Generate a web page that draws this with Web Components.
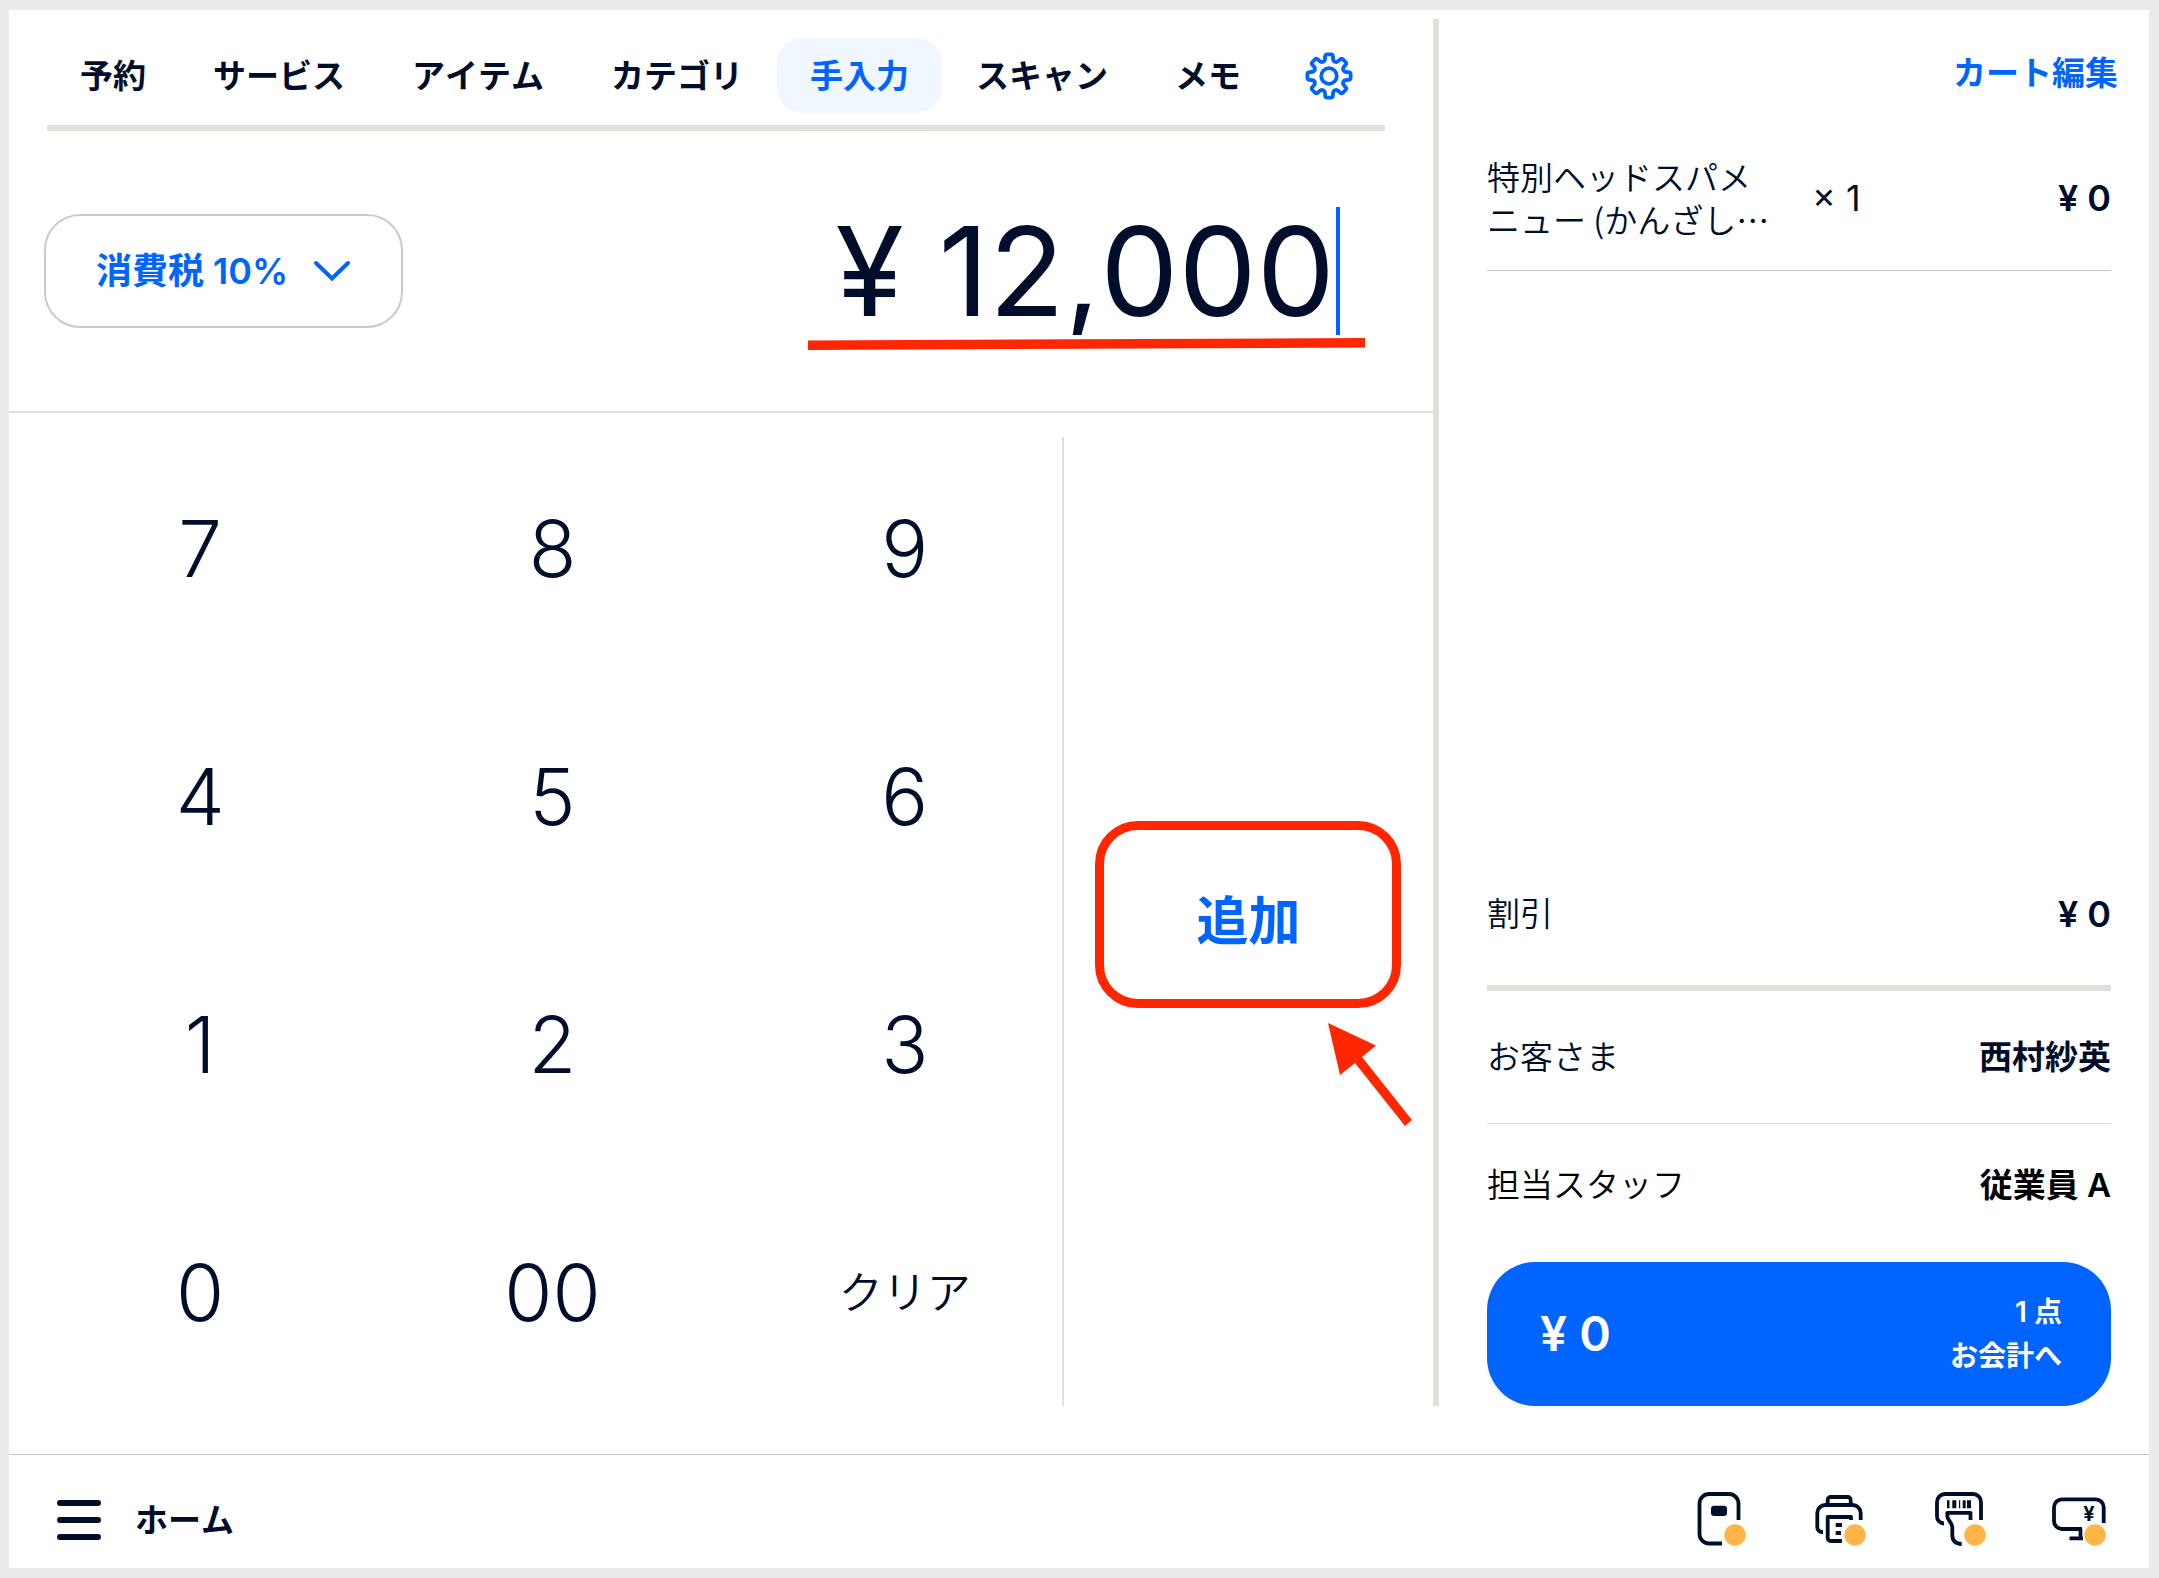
<!DOCTYPE html>
<html lang="ja">
<head>
<meta charset="utf-8">
<title>手入力</title>
<style>
    :root {
        --ink: #000d2b;
        --blue: #0064ff;
        --tint: #f0f7ff;
        --rule: #dfe0d9;
        --hairline: #c6c6c6;
        --mark: #ff2600;
        --dot: #ffb546;
    }

    body {
        margin: 0;
        background: #ebebeb;
        color: var(--ink);
        font: 500 33px/44px Inter, "Noto Sans CJK JP", sans-serif;
        font-kerning: none;
    }
</style>
</head>
<body>
<pos-app>
    <pos-tabs slot="main">
        <pos-tab>予約</pos-tab>
        <pos-tab>サービス</pos-tab>
        <pos-tab>アイテム</pos-tab>
        <pos-tab>カテゴリ</pos-tab>
        <pos-tab active>手入力</pos-tab>
        <pos-tab>スキャン</pos-tab>
        <pos-tab>メモ</pos-tab>
    </pos-tabs>
    <amount-entry slot="main" value="¥ 12,000" tax="消費税 10%"></amount-entry>
    <key-pad slot="main">追加</key-pad>

    <pos-cart slot="cart">
        <cart-item slot="items" quantity="1" price="¥ 0">特別ヘッドスパメニュー (かんざし…</cart-item>
        <cart-row class="discount" value="¥ 0">割引</cart-row>
        <cart-row class="customer" value="西村紗英">お客さま</cart-row>
        <cart-row class="staff" value="従業員 A">担当スタッフ</cart-row>
        <checkout-button slot="checkout" total="¥ 0" count="1 点">お会計へ</checkout-button>
    </pos-cart>

    <pos-footer slot="footer">ホーム</pos-footer>
</pos-app>

<script>
const resetStyle = `
    * { box-sizing: border-box; }
    button, input, select {
        margin: 0;
        padding: 0;
        border: 0;
        background: none;
        color: inherit;
        font: inherit;
        font-kerning: inherit;
        cursor: pointer;
    }
    svg { display: block; fill: none; }
`

// Attaches an open root and fills it with the element's own styles and markup
class PosElement extends HTMLElement {
    constructor() {
        super()
        const template = document.createElement('template')
        template.innerHTML = `<style>${resetStyle}${this.constructor.css}</style>${this.constructor.html}`
        this.attachShadow({ mode: 'open' })
        this.shadowRoot.appendChild(template.content.cloneNode(true))
    }

    fill(selector, attribute) {
        this.shadowRoot.querySelector(selector).textContent = this.getAttribute(attribute)
    }
}

class PosApp extends PosElement {
    static css = `
        :host {
            display: grid;
            grid-template-columns: minmax(0, 1fr) 6px 710px;
            grid-template-rows: 1fr auto;
            box-sizing: border-box;
            min-height: 100vh;
            border: solid #ebebeb;
            border-width: 10px 10px 10px 9px;
            background: #fff;
        }
        main { display: flex; flex-direction: column; }
        .divider { margin: 9px 0 48px; background: var(--rule); }
        aside { display: grid; }
        footer { grid-column: 1 / -1; border-top: 1px solid var(--hairline); }
    `
    static html = `
        <main><slot name="main"></slot></main>
        <div class="divider"></div>
        <aside><slot name="cart"></slot></aside>
        <footer><slot name="footer"></slot></footer>
    `
}

// One tooth per 45 degrees, joined by a rounded valley
function gearPath() {
    const point = (u, v, deg) => {
        const a = deg * Math.PI / 180
        const x = 24 + u * Math.cos(a) - v * Math.sin(a)
        const y = 24 + u * Math.sin(a) + v * Math.cos(a)
        return `${x.toFixed(2)} ${y.toFixed(2)}`
    }
    let d = `M${point(17.5, -4, 0)}`
    for (let deg = 0; deg < 360; deg += 45) {
        d += `L${point(19.3, -3.9, deg)}Q${point(21.6, -3.9, deg)} ${point(21.6, -1.8, deg)}`
        d += `L${point(21.6, 1.8, deg)}Q${point(21.6, 3.9, deg)} ${point(19.3, 3.9, deg)}`
        d += `L${point(17.5, 4, deg)}C${point(14.3, 4, deg)} ${point(14.3, -4, deg + 45)} ${point(17.5, -4, deg + 45)}`
    }
    return d + 'Z'
}

class PosTabs extends PosElement {
    static css = `
        :host {
            display: block;
            margin: 0 48px 0 38px;
            padding: 28px 0 12px;
            border-bottom: 6px solid var(--rule);
        }
        nav { display: flex; align-items: center; gap: 1px; }
        .settings { margin-left: 30px; color: var(--blue); }
    `
    static html = `
        <nav>
            <slot></slot>
            <button class="settings" aria-label="設定">
                <svg width="48" height="48" viewBox="0 0 48 48" stroke="currentColor" stroke-width="3.8" stroke-linejoin="round">
                    <path d="${gearPath()}"/>
                    <circle cx="24" cy="24" r="7.8"/>
                </svg>
            </button>
        </nav>
    `
}

class PosTab extends PosElement {
    static css = `
        :host { display: block; }
        button {
            height: 75px;
            padding: 0 33px;
            border-radius: 26px;
            font-weight: 600;
            white-space: nowrap;
        }
        :host([active]) button { background: var(--tint); color: var(--blue); }
    `
    static html = `<button><slot></slot></button>`
}

class AmountEntry extends PosElement {
    static css = `
        :host {
            display: flex;
            align-items: center;
            justify-content: space-between;
            height: 280px;
            padding: 0 93px 0 35px;
            border-bottom: 2px solid var(--rule);
        }
        .tax { display: grid; align-items: center; color: var(--blue); }
        .tax > * { grid-area: 1 / 1; }
        select {
            appearance: none;
            width: 359px;
            height: 114px;
            padding: 0 0 0 50px;
            border: 2px solid #c8ccc6;
            border-radius: 36px;
            font-size: 36px;
            font-weight: 600;
        }
        .tax svg { justify-self: end; margin-right: 52px; pointer-events: none; }
        .amount { position: relative; }
        input {
            width: 640px;
            height: 128px;
            padding-right: 1px;
            border-right: 4px solid var(--blue);
            font-size: 124px;
            font-weight: 400;
            line-height: 128px;
            text-align: right;
            cursor: text;
        }
        .underline { position: absolute; top: 130px; right: -25px; }
    `
    static html = `
        <label class="tax">
            <select aria-label="税率"><option></option></select>
            <svg width="38" height="22" viewBox="0 0 38 22" stroke="currentColor" stroke-width="4" stroke-linecap="round">
                <path d="M3 3l16 15.5L35 3"/>
            </svg>
        </label>
        <div class="amount">
            <input type="text" inputmode="numeric" aria-label="金額">
            <svg class="underline" width="557" height="14" viewBox="0 0 557 14" stroke="var(--mark)" stroke-width="9.5">
                <path d="M0 8.2L557 5.8"/>
            </svg>
        </div>
    `

    connectedCallback() {
        this.fill('option', 'tax')
        this.shadowRoot.querySelector('input').value = this.getAttribute('value')
    }
}

class KeyPad extends PosElement {
    static css = `
        :host {
            display: grid;
            grid-template-columns: minmax(0, 1fr) 369px;
            flex: 1;
            padding: 24px 0 48px;
        }
        .keys {
            display: grid;
            grid-template-columns: repeat(3, 1fr);
            grid-auto-rows: 1fr;
            gap: 48px 52px;
            padding: 12px 7px 13px 41px;
            border-right: 2px solid var(--rule);
        }
        .keys button { font-size: 78px; font-weight: 300; line-height: 96px; }
        .keys .clear { font-size: 44px; font-weight: 350; }
        .add { position: relative; display: grid; place-items: center; }
        .add button {
            width: 280px;
            height: 160px;
            color: var(--blue);
            font-size: 52px;
            font-weight: 600;
        }
        .frame, .arrow { position: absolute; pointer-events: none; }
        .frame {
            inset: calc(50% - 101px) 32px auto 31px;
            height: 187px;
            border: 9px solid var(--mark);
            border-radius: 43px;
        }
        .arrow { top: calc(50% + 101px); right: 20px; }
    `
    static html = `
        <div class="keys">
            ${['7', '8', '9', '4', '5', '6', '1', '2', '3', '0', '00'].map(key => `<button>${key}</button>`).join('')}
            <button class="clear">クリア</button>
        </div>
        <div class="add">
            <button><slot></slot></button>
            <div class="frame"></div>
            <svg class="arrow" width="85" height="104" viewBox="0 0 85 104">
                <path d="M0 0L48 22.5L34 34L84 97L77 103L27 40L12 52Z" fill="var(--mark)"/>
            </svg>
        </div>
    `
}

class PosCart extends PosElement {
    static css = `
        :host { display: flex; flex-direction: column; padding-bottom: 48px; }
        header { display: flex; justify-content: flex-end; padding: 41px 31px 0; }
        header button { color: var(--blue); font-weight: 600; }
        .body { display: flex; flex: 1; flex-direction: column; padding: 0 38px 0 48px; }
        .items { flex: 1; }
        ::slotted(.discount) { padding-bottom: 49px; border-bottom: 6px solid var(--rule); }
        ::slotted(.customer) { padding: 44px 0; border-bottom: 1px solid var(--rule); }
        ::slotted(.staff) { padding: 39px 0 55px; color: #000; }
    `
    static html = `
        <header><button>カート編集</button></header>
        <div class="body">
            <div class="items"><slot name="items"></slot></div>
            <slot></slot>
            <slot name="checkout"></slot>
        </div>
    `
}

class CartItem extends PosElement {
    static css = `
        :host {
            display: grid;
            grid-template-columns: 292px 1fr auto;
            align-items: center;
            gap: 33px;
            padding: 60px 0 29px;
            border-bottom: 1px solid var(--hairline);
        }
        .name { font-family: "Noto Sans CJK JP", sans-serif; font-weight: 350; line-height: 43px; }
        .quantity { font-size: 36px; font-weight: 400; }
        .price { font-size: 36px; font-weight: 600; }
    `
    static html = `
        <div class="name"><slot></slot></div>
        <div class="quantity">× <span></span></div>
        <div class="price"></div>
    `

    connectedCallback() {
        this.fill('.quantity span', 'quantity')
        this.fill('.price', 'price')
    }
}

class CartRow extends PosElement {
    static css = `
        :host { display: flex; align-items: center; justify-content: space-between; }
        .label { font-weight: 350; }
        .value { font-weight: 600; }
        :host(.discount) .value { font-size: 36px; }
    `
    static html = `
        <span class="label"><slot></slot></span>
        <span class="value"></span>
    `

    connectedCallback() {
        this.fill('.value', 'value')
    }
}

class CheckoutButton extends PosElement {
    static css = `
        :host { display: block; }
        button {
            display: flex;
            align-items: center;
            justify-content: space-between;
            width: 100%;
            height: 144px;
            padding: 0 49px 0 53px;
            border-radius: 48px;
            background: var(--blue);
            color: #fff;
            font-weight: 600;
        }
        .total { font-size: 48px; }
        .action { font-size: 28px; text-align: right; }
        .action span { display: block; }
    `
    static html = `
        <button>
            <span class="total"></span>
            <span class="action"><span class="count"></span><slot></slot></span>
        </button>
    `

    connectedCallback() {
        this.fill('.total', 'total')
        this.fill('.count', 'count')
    }
}

const deviceIcons = {
    カードリーダー: `
        <path d="M46.5 30V13.5a9.5 9.5 0 0 0-9.5-9.5H17a9.5 9.5 0 0 0-9.5 9.5V44a9.5 9.5 0 0 0 9.5 9.5h13"/>
        <rect x="19" y="15.7" width="16" height="10.4" rx="3" fill="currentColor" stroke="none"/>`,
    プリンター: `
        <path d="M11 42h-1a4.7 4.7 0 0 1-4.7-4.7V23a8 8 0 0 1 8-8h27.4a8 8 0 0 1 8 8v7"/>
        <path d="M15.7 15v-5a3 3 0 0 1 3-3h17a3 3 0 0 1 3 3v5"/>
        <path d="M39 30v-3H15.7v21a3 3 0 0 0 3 3H30M23.7 35H30M23.7 43H29"/>`,
    バーコードリーダー: `
        <path d="M12 33.5a7 7 0 0 1-7-7V12a8 8 0 0 1 8-8h28a8 8 0 0 1 8 8v18"/>
        <path d="M38.5 30v-7.2H15.3v3.2c0 4.5 5 6.5 5 11.5V45c0 5 2.5 8.8 9.4 9"/>
        <path stroke="none" fill="currentColor" d="M15 10.3h2.5v8H15zM20.3 10.3h4v8h-4zM27 10.3h1.2v8H27zM30.7 10.3h3v8h-3zM35 10.3h4v8h-4z"/>`,
    カスタマーディスプレイ: `
        <path d="M51.7 33V17.3a8 8 0 0 0-8-8H10a8 8 0 0 0-8 8V31a8 8 0 0 0 8 8h20M28.5 39v9.3M31 48.3H17.5"/>
        <text x="37" y="31" text-anchor="middle" font-size="20" font-weight="700" fill="currentColor" stroke="none">¥</text>`
}

class PosFooter extends PosElement {
    static css = `
        :host {
            display: flex;
            align-items: center;
            justify-content: space-between;
            height: 96px;
            padding: 17px 41px 0 48px;
        }
        .home { display: flex; align-items: center; gap: 34px; font-weight: 600; }
        .devices { display: flex; gap: 64px; }
    `
    static html = `
        <button class="home">
            <svg width="44" height="42" viewBox="0 0 44 42" stroke="currentColor" stroke-width="6" stroke-linecap="round">
                <path d="M3 4h38M3 21h38M3 38h38"/>
            </svg>
            <slot></slot>
        </button>
        <div class="devices">
            ${Object.entries(deviceIcons).map(([name, icon]) => `
                <button aria-label="${name}">
                    <svg width="56" height="60" viewBox="0 0 56 60" stroke="currentColor" stroke-width="3.8" stroke-linejoin="round">
                        ${icon}
                        <circle cx="43" cy="45" r="11.5" fill="var(--dot)" stroke="#fff" stroke-width="1.5"/>
                    </svg>
                </button>`).join('')}
        </div>
    `
}

customElements.define('pos-app', PosApp)
customElements.define('pos-tabs', PosTabs)
customElements.define('pos-tab', PosTab)
customElements.define('amount-entry', AmountEntry)
customElements.define('key-pad', KeyPad)
customElements.define('pos-cart', PosCart)
customElements.define('cart-item', CartItem)
customElements.define('cart-row', CartRow)
customElements.define('checkout-button', CheckoutButton)
customElements.define('pos-footer', PosFooter)
</script>
</body>
</html>
